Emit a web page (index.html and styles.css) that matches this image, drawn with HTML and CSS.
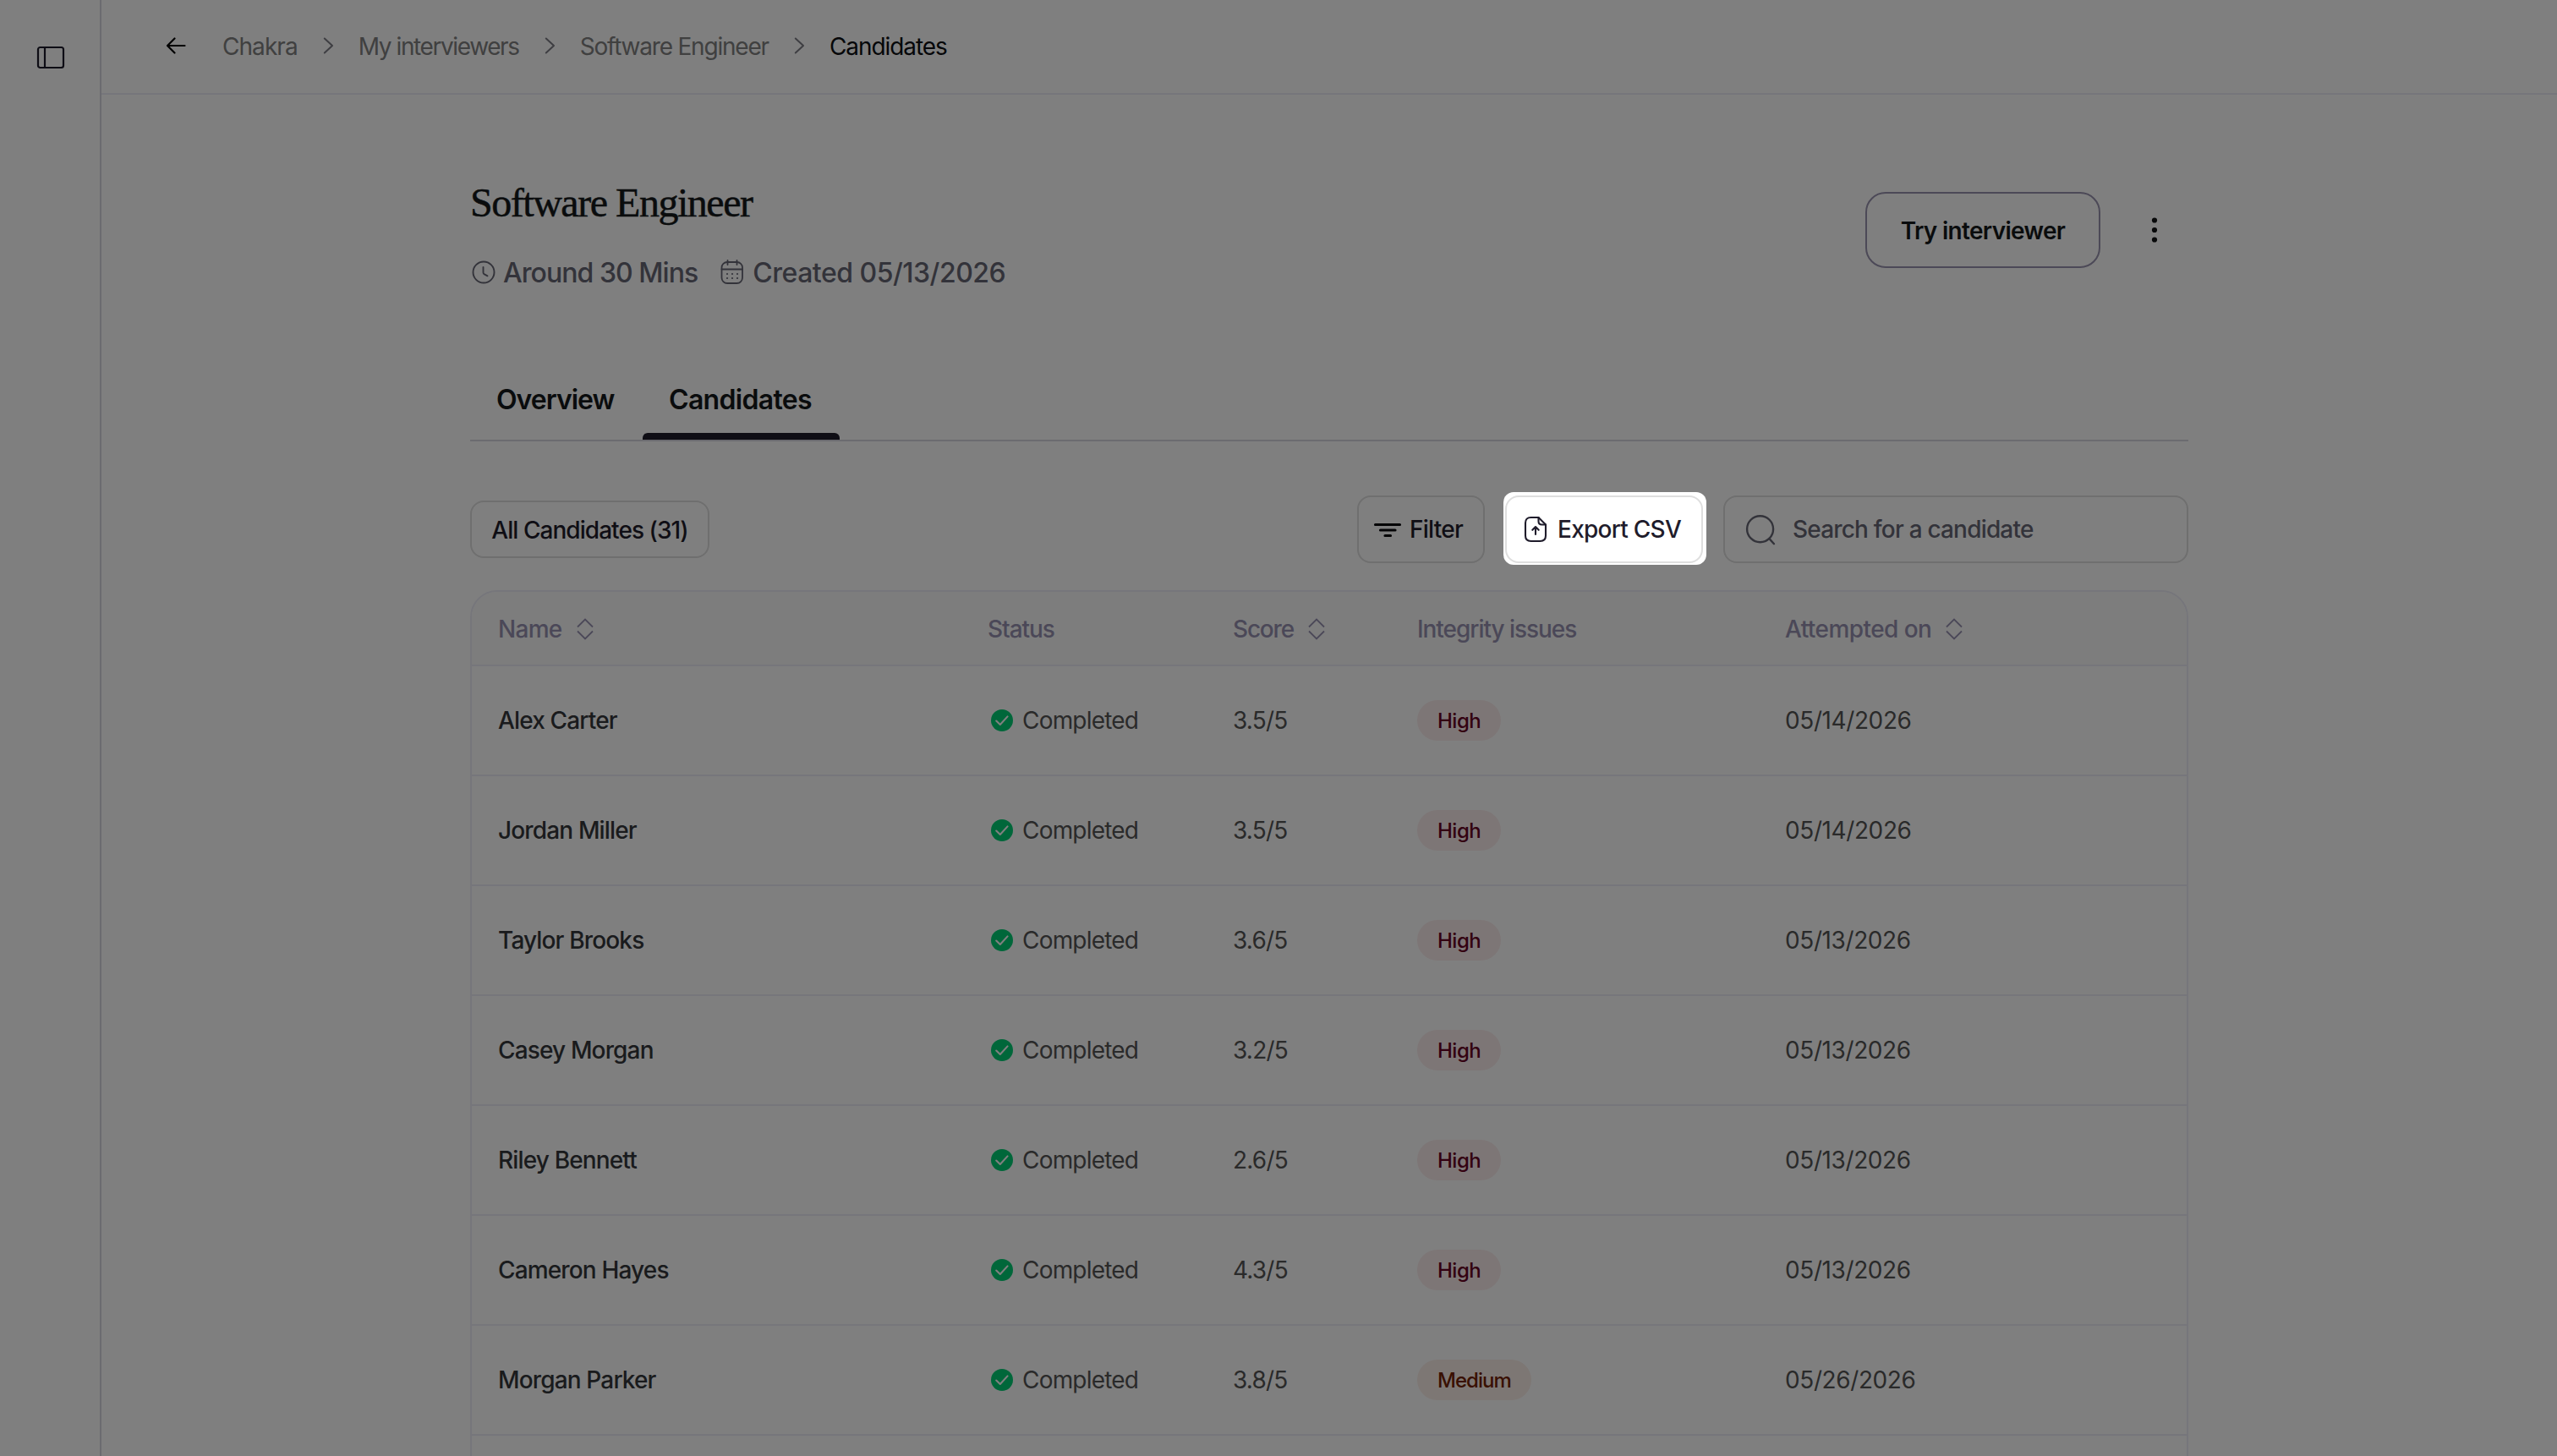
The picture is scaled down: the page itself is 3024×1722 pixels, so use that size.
FILE: index.html
```
<!DOCTYPE html>
<html lang="en">
<head>
    <meta charset="UTF-8">
    <title>Software Engineer - Candidates</title>
    <link rel="stylesheet" href="styles.css">
</head>
<body>
    <!-- shared icons -->
    <svg width="0" height="0" class="sprite">
        <symbol id="chevron" viewBox="0 0 13 20">
            <path d="M1.8 1.5 L11 10 L1.8 18.5" fill="none" stroke="currentColor" stroke-width="2" stroke-linecap="round" stroke-linejoin="round"/>
        </symbol>
        <symbol id="sort" viewBox="0 0 20 26">
            <path d="M1 10.5 L10 1.5 L19 10.5 M1 15.5 L10 24.5 L19 15.5" fill="none" stroke="currentColor" stroke-width="1.8"/>
        </symbol>
        <symbol id="check" viewBox="0 0 26 26">
            <circle cx="13" cy="13" r="13" fill="#00ce74"/>
            <path d="M6.2 13.6 L10.8 18 L19.6 8.4" fill="none" stroke="#fff" stroke-width="2.1" stroke-linecap="round" stroke-linejoin="round"/>
        </symbol>
    </svg>

    <div class="app">
        <div class="sidebar">
            <svg class="sidebar-icon" width="34" height="28" viewBox="0 0 34 28" fill="none" stroke="currentColor" stroke-width="2.2">
                <rect x="2" y="2" width="30" height="24" rx="2.5"/>
                <path d="M10 2 V26"/>
            </svg>
        </div>

        <div class="main">
            <div class="topbar">
                <svg class="back" width="24" height="20" viewBox="0 0 24 20" fill="none" stroke="currentColor" stroke-width="2.2" stroke-linecap="round" stroke-linejoin="round">
                    <path d="M22.5 10 H2 M10.5 1.5 L2 10 L10.5 18.5"/>
                </svg>
                <span class="crumb">Chakra</span>
                <svg class="chevron"><use href="#chevron"/></svg>
                <span class="crumb interviewers">My interviewers</span>
                <svg class="chevron"><use href="#chevron"/></svg>
                <span class="crumb role">Software Engineer</span>
                <svg class="chevron"><use href="#chevron"/></svg>
                <span class="crumb current">Candidates</span>
            </div>

            <div class="content">
                <div class="head">
                    <div>
                        <h1>Software Engineer</h1>
                        <div class="meta">
                            <svg width="30" height="30" viewBox="0 0 30 30" fill="none" stroke="currentColor" stroke-width="1.9" stroke-linecap="round" stroke-linejoin="round">
                                <circle cx="16" cy="15" r="12.5"/>
                                <path d="M15.5 9 V15.2 Q15.5 16.5 16.5 17.1 L20.5 19.3"/>
                            </svg>
                            <span class="duration">Around 30 Mins</span>
                            <svg class="calendar" width="28" height="30" viewBox="0 0 28 30" fill="none" stroke="currentColor" stroke-width="1.8" stroke-linecap="round">
                                <rect x="1.5" y="3" width="24.5" height="25" rx="6.5"/>
                                <path d="M1.5 11.5 H26 M8.5 1 V6 M19.5 1 V6"/>
                                <path d="M8 17 h.01 M14 17 h.01 M20 17 h.01 M8 22 h.01 M14 22 h.01 M20 22 h.01" stroke-width="2.2"/>
                            </svg>
                            <span class="created">Created 05/13/2026</span>
                        </div>
                    </div>
                    <div class="actions">
                        <button class="try">Try interviewer</button>
                        <svg class="dots" width="8" height="32" viewBox="0 0 8 32" fill="currentColor">
                            <circle cx="4" cy="4.5" r="3.1"/>
                            <circle cx="4" cy="16" r="3.1"/>
                            <circle cx="4" cy="27.5" r="3.1"/>
                        </svg>
                    </div>
                </div>

                <div class="tabs">
                    <div class="tab overview">Overview</div>
                    <div class="tab active">Candidates</div>
                </div>

                <div class="toolbar">
                    <button class="chip">All Candidates (31)</button>
                    <div class="tools">
                        <button class="tool filter">
                            <svg width="34" height="20" viewBox="0 0 34 20" fill="none" stroke="#08080c" stroke-width="3.2" stroke-linecap="round">
                                <path d="M2.5 4.5 H31.5 M8.5 11 H26 M14 17.5 H20.5"/>
                            </svg>
                            Filter
                        </button>
                        <button class="tool export">
                            <svg width="28" height="32" viewBox="0 0 28 32" fill="none" stroke="currentColor" stroke-width="2.1" stroke-linecap="round" stroke-linejoin="round">
                                <path d="M17.5 2 H8.5 Q2 2 2 8.5 V23.5 Q2 30 8.5 30 H19.5 Q26 30 26 23.5 V10.5 Z"/>
                                <path d="M17.5 2 V6.5 Q17.5 10.5 21.5 10.5 H26"/>
                                <path d="M14 22 V13.5 M10.3 16.8 L14 13 L17.7 16.8"/>
                            </svg>
                            Export CSV
                        </button>
                        <div class="search">
                            <svg width="36" height="38" viewBox="0 0 36 38" fill="none" stroke="currentColor" stroke-width="2.4" stroke-linecap="round">
                                <circle cx="17.6" cy="18.7" r="15.5"/>
                                <path d="M28.7 30.4 L34 36.2"/>
                            </svg>
                            <span>Search for a candidate</span>
                        </div>
                    </div>
                </div>

                <div class="table">
                    <div class="row header">
                        <div>Name <svg class="sort"><use href="#sort"/></svg></div>
                        <div class="plain">Status</div>
                        <div class="score">Score <svg class="sort"><use href="#sort"/></svg></div>
                        <div class="plain">Integrity issues</div>
                        <div class="attempted">Attempted on <svg class="sort"><use href="#sort"/></svg></div>
                    </div>
                    <div class="row">
                        <div class="name">Alex Carter</div>
                        <div class="status"><svg><use href="#check"/></svg>Completed</div>
                        <div class="score">3.5/5</div>
                        <div><span class="pill high">High</span></div>
                        <div class="date">05/14/2026</div>
                    </div>
                    <div class="row">
                        <div class="name">Jordan Miller</div>
                        <div class="status"><svg><use href="#check"/></svg>Completed</div>
                        <div class="score">3.5/5</div>
                        <div><span class="pill high">High</span></div>
                        <div class="date">05/14/2026</div>
                    </div>
                    <div class="row">
                        <div class="name">Taylor Brooks</div>
                        <div class="status"><svg><use href="#check"/></svg>Completed</div>
                        <div class="score">3.6/5</div>
                        <div><span class="pill high">High</span></div>
                        <div class="date">05/13/2026</div>
                    </div>
                    <div class="row">
                        <div class="name">Casey Morgan</div>
                        <div class="status"><svg><use href="#check"/></svg>Completed</div>
                        <div class="score">3.2/5</div>
                        <div><span class="pill high">High</span></div>
                        <div class="date">05/13/2026</div>
                    </div>
                    <div class="row">
                        <div class="name">Riley Bennett</div>
                        <div class="status"><svg><use href="#check"/></svg>Completed</div>
                        <div class="score">2.6/5</div>
                        <div><span class="pill high">High</span></div>
                        <div class="date">05/13/2026</div>
                    </div>
                    <div class="row">
                        <div class="name">Cameron Hayes</div>
                        <div class="status"><svg><use href="#check"/></svg>Completed</div>
                        <div class="score">4.3/5</div>
                        <div><span class="pill high">High</span></div>
                        <div class="date">05/13/2026</div>
                    </div>
                    <div class="row">
                        <div class="name">Morgan Parker</div>
                        <div class="status"><svg><use href="#check"/></svg>Completed</div>
                        <div class="score">3.8/5</div>
                        <div><span class="pill medium">Medium</span></div>
                        <div class="date">05/26/2026</div>
                    </div>
                    <div class="row"></div>
                </div>
            </div>
        </div>
    </div>
</body>
</html>
```
FILE: styles.css
```
* {
    box-sizing: border-box;
}
body {
    margin: 0;
    height: 100vh;
    overflow: hidden;
    font-family: Inter, "Liberation Sans", sans-serif;
    font-size: 28px;
    color: #14161a;
    background-color: #fff;
}
svg {
    flex: none;
    display: block;
}
.sprite {
    position: absolute;
}
button {
    font: inherit;
    color: inherit;
    background: none;
    white-space: nowrap;
}
.app {
    display: flex;
    height: 100vh;
}
.sidebar {
    flex: none;
    width: 120px;
    padding: 54px 0 0 43px;
    border-right: 2px solid #d6d6e0;
}
.sidebar-icon {
    color: #1c1a2a;
}
.main {
    flex: 1;
}

/* breadcrumb */
.topbar {
    display: flex;
    align-items: center;
    height: 112px;
    padding: 0 0 2px 76px;
    border-bottom: 2px solid #ececf6;
}
.back {
    margin-right: 43px;
    color: #000;
}
.crumb {
    padding-top: 1px;
    color: #808080;
    letter-spacing: -0.95px;
    white-space: nowrap;
}
.crumb.interviewers {
    letter-spacing: -1.4px;
}
.crumb.role {
    letter-spacing: -1.2px;
}
.crumb.current {
    color: #0c0e12;
    letter-spacing: -1.08px;
}
.chevron {
    width: 13px;
    height: 20px;
    margin: 0 29px 0 30px;
    color: #7c7c84;
}

/* page head */
.content {
    width: 2032px;
    margin: 0 auto;
    padding-top: 95px;
}
.head {
    display: flex;
    justify-content: space-between;
    height: 135px;
}
h1 {
    margin: 0;
    font-family: "Liberation Serif", serif;
    font-size: 48px;
    font-weight: 400;
    line-height: 66px;
    letter-spacing: -1.47px;
    color: #14181a;
    -webkit-text-stroke: 0.5px #14181a;
}
.meta {
    display: flex;
    align-items: center;
    height: 40px;
    margin-top: 29px;
    font-size: 32px;
    font-weight: 500;
    color: #676775;
}
.duration {
    margin: 0 27px 0 9px;
    padding-top: 1px;
    letter-spacing: -0.95px;
}
.created {
    margin-left: 10px;
    padding-top: 1px;
    letter-spacing: -0.5px;
}
.actions {
    display: flex;
    align-items: center;
    height: 90px;
    margin-top: 20px;
    padding-right: 36px;
}
.try {
    width: 278px;
    height: 90px;
    padding: 1px 0 0;
    border: 2px solid #9892ae;
    border-radius: 24px;
    font-weight: 600;
    letter-spacing: -0.69px;
    color: #14181a;
}
.dots {
    margin-left: 60px;
    color: #101214;
}
.tabs {
    display: flex;
    height: 90px;
    margin-top: 90px;
    border-bottom: 2px solid #d6d6e0;
    font-size: 32px;
    font-weight: 600;
    color: #14181a;
}
.tab {
    width: 233px;
    padding: 21px 0 0 31px;
    line-height: 40px;
    letter-spacing: -0.68px;
}
.tab.overview {
    width: 204px;
    letter-spacing: -1px;
}
.tab.active {
    position: relative;
}
.tab.active::after {
    content: "";
    position: absolute;
    left: 0;
    right: 0;
    bottom: 0;
    height: 8px;
    border-radius: 6px 6px 0 0;
    background-color: #1f1c2b;
}

/* toolbar */
.toolbar {
    display: flex;
    align-items: center;
    justify-content: space-between;
    margin-top: 64px;
    font-weight: 500;
    color: #1f1c2b;
}
.chip {
    width: 283px;
    height: 68px;
    padding: 1px 0 0;
    border: 2px solid #dedede;
    border-radius: 16px;
    letter-spacing: -0.95px;
}
.tools {
    display: flex;
    gap: 24px;
}
.tool {
    display: flex;
    align-items: center;
    height: 80px;
    padding: 0;
    border: 2px solid #dedede;
    border-radius: 16px;
    letter-spacing: -0.74px;
}
.filter {
    width: 151px;
    padding-left: 17px;
    gap: 9px;
}
.export {
    position: relative;
    width: 234px;
    padding-left: 20px;
    gap: 12px;
}
/* spotlight: everything outside the export button is dimmed */
.export::before {
    content: "";
    position: absolute;
    top: -6px;
    right: -6px;
    bottom: -4px;
    left: -4px;
    z-index: 10;
    border-radius: 12px;
    box-shadow: 0 0 0 4000px rgba(0, 0, 0, 0.5);
    pointer-events: none;
}
.search {
    display: flex;
    align-items: center;
    gap: 20px;
    width: 550px;
    height: 80px;
    padding-left: 24px;
    border: 2px solid #dedede;
    border-radius: 16px;
    letter-spacing: -0.81px;
    color: #676775;
}

/* table */
.table {
    margin-top: 32px;
    border: 2px solid #ececf6;
    border-radius: 32px 32px 0 0;
    overflow: hidden;
}
.row {
    display: grid;
    grid-template-columns: 579px 291px 217px 435px 1fr;
    align-items: center;
    height: 130px;
    padding-left: 31px;
    border-bottom: 2px solid #ececf6;
    letter-spacing: -0.8px;
    color: #555;
}
.row > div {
    display: flex;
    align-items: center;
}
.row.header {
    height: 88px;
    padding-top: 1px;
    font-weight: 500;
    letter-spacing: -0.7px;
    color: #9691b0;
    background-color: #fbfbfb;
}
.row.header .plain {
    padding-top: 1px;
    letter-spacing: -1.05px;
}
.row.header .score {
    letter-spacing: -1.2px;
}
.row.header .attempted {
    letter-spacing: -0.57px;
}
.sort {
    width: 20px;
    height: 26px;
    margin-left: 17px;
}
.row .score {
    margin-left: -1px;
}
.row .name {
    font-weight: 500;
    letter-spacing: -0.85px;
    color: #34373b;
}
.status svg {
    width: 26px;
    height: 26px;
    margin: 0 11px 0 4px;
}
.row .date {
    letter-spacing: -0.4px;
}
.pill {
    height: 48px;
    padding: 0 24px;
    border-radius: 24px;
    font-size: 24px;
    font-weight: 500;
    line-height: 50px;
}
.pill.high {
    color: #660022;
    letter-spacing: -0.5px;
    background-color: #fbecec;
}
.pill.medium {
    color: #722000;
    letter-spacing: -0.95px;
    background-color: #fbeee8;
}
```
